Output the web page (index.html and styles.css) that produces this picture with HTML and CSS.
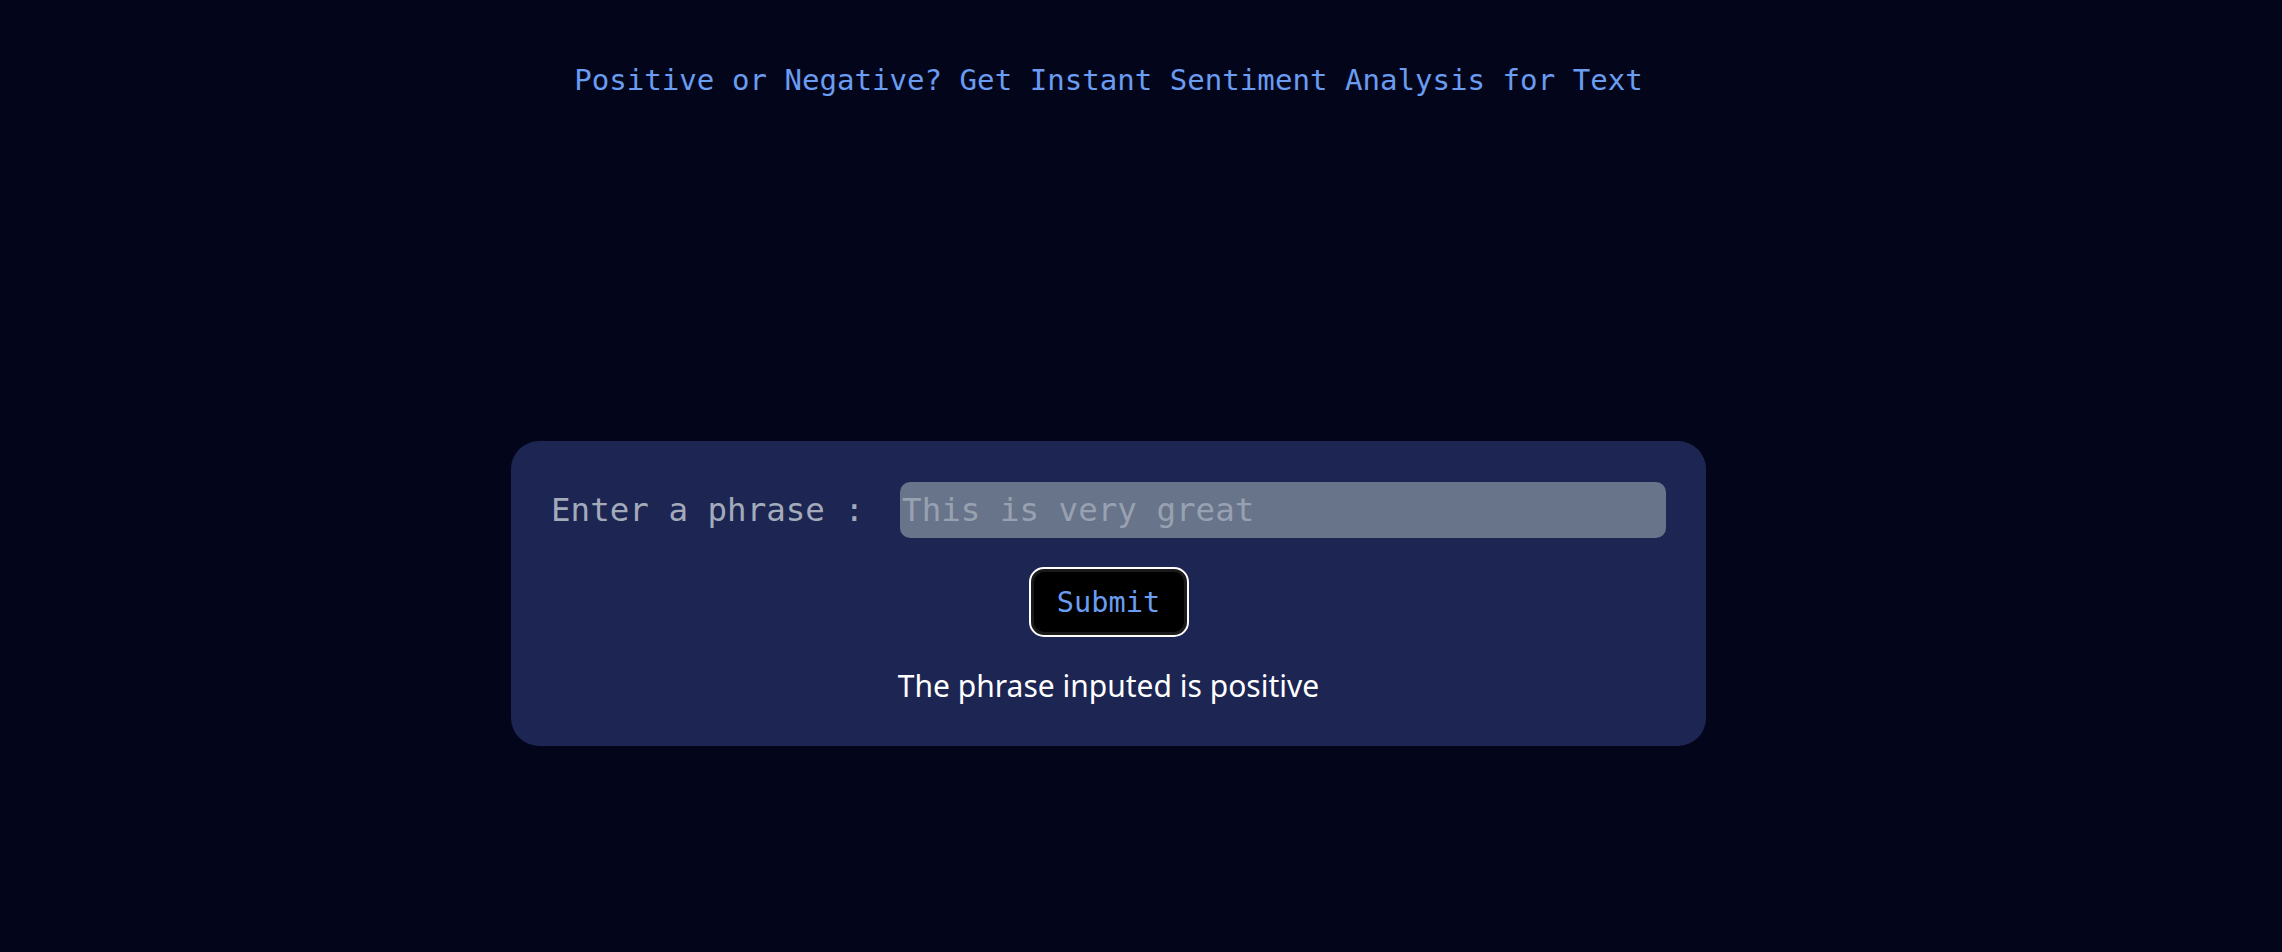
FILE: index.html
```html
<!DOCTYPE html>
<html lang="en">
<head>
<meta charset="utf-8">
<title>Sentiment Analysis</title>
<link rel="stylesheet" href="styles.css">
</head>
<body>
<main class="page">
  <h1 class="title">Positive or Negative? Get Instant Sentiment Analysis for Text</h1>
  <section class="card">
    <form class="form" onsubmit="return false;">
      <div class="row">
        <label class="label" for="phrase">Enter a phrase :</label>
        <input class="input" id="phrase" type="text" placeholder="This is very great">
      </div>
      <button class="submit" type="submit">Submit</button>
    </form>
    <p class="result">The phrase inputed is positive</p>
  </section>
</main>
</body>
</html>
```

FILE: styles.css
```css
html, body {
  margin: 0;
  padding: 0;
  background: #03061a;
}

body {
  height: 952px;
  overflow: hidden;
}

.page {
  width: 2217px;
  display: flex;
  flex-direction: column;
  align-items: center;
}

.title {
  margin: 0;
  padding-top: 64px;
  font-family: "DejaVu Sans Mono", monospace;
  font-size: 29.1px;
  line-height: 33px;
  font-weight: normal;
  color: #6a9cf2;
  text-align: center;
  white-space: nowrap;
}

.card {
  margin-top: 344px;
  width: 1195px;
  box-sizing: border-box;
  padding: 41px 40px 40px;
  background: #1d2553;
  border-radius: 28px;
  display: flex;
  flex-direction: column;
  align-items: center;
}

.form {
  width: 100%;
  display: flex;
  flex-direction: column;
  align-items: center;
}

.row {
  width: 100%;
  display: flex;
  align-items: center;
  gap: 36px;
}

.label {
  font-family: "DejaVu Sans Mono", monospace;
  font-size: 32.5px;
  color: #a3abbb;
  white-space: nowrap;
}

.input {
  flex: 1;
  height: 56px;
  box-sizing: border-box;
  border: none;
  outline: none;
  border-radius: 10px;
  padding: 0 2px;
  background: #687489;
  font-family: "DejaVu Sans Mono", monospace;
  font-size: 32.5px;
  color: #e5e7eb;
}

.input::placeholder {
  color: #98a1b1;
  opacity: 1;
}

.submit {
  margin-top: 29px;
  width: 160px;
  height: 70px;
  box-sizing: border-box;
  border: 2px solid #ffffff;
  border-radius: 15px;
  box-shadow: inset 0 0 0 3px #1a1a1a;
  background: #000000;
  padding: 0;
  font-family: "DejaVu Sans Mono", monospace;
  font-size: 28.6px;
  color: #6a9cf2;
  cursor: pointer;
}

.result {
  margin: 28px 0 0;
  font-family: "Noto Sans", "Open Sans", sans-serif;
  font-size: 30px;
  line-height: 41px;
  color: #ffffff;
  white-space: nowrap;
}
```
